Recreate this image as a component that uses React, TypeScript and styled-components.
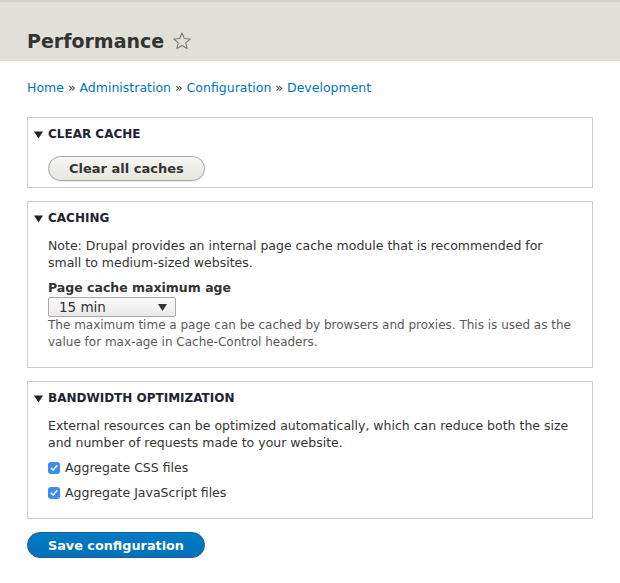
import React from 'react'
import styled, { createGlobalStyle } from 'styled-components'

const Global = createGlobalStyle`
  body {
    margin: 0;
    background: #fff;
    font-family: "DejaVu Sans", Verdana, sans-serif;
    font-size: 12.5px;
    color: #333;
  }
`

const Header = styled.header`
  background: #e0e0d8;
  border-top: 2px solid #d2d2ca;
  height: 61px;
  box-sizing: border-box;
  padding: 27px 27px 0;
`

const Title = styled.h1`
  margin: 0;
  font-size: 19px;
  line-height: 24px;
  font-weight: bold;
  color: #333;
  display: flex;
  align-items: center;
  gap: 8px;
`

const Main = styled.main`
  padding: 18px 27px 20px;
`

const Crumbs = styled.nav`
  color: #333;
  line-height: 17px;
  margin-bottom: 21px;
  a {
    color: #0074bd;
    text-decoration: none;
  }
`

const Fieldset = styled.section<{ $pad?: number }>`
  border: 1px solid #ccc;
  margin-bottom: 13px;
  padding: 8px 0 ${p => p.$pad ?? 17}px;
`

const Legend = styled.div`
  font-weight: bold;
  text-transform: uppercase;
  font-size: 12px;
  line-height: 15px;
  color: #222330;
  padding: 1px 0 0 6px;
  margin-bottom: 11px;
  display: flex;
  align-items: center;
  gap: 5px;
`

const Body = styled.div`
  padding: 0 20px;
`

const Text = styled.p<{ $muted?: boolean }>`
  margin: 0 0 8px;
  line-height: 17px;
  font-size: ${p => (p.$muted ? '12px' : '12.5px')};
  color: ${p => (p.$muted ? '#595959' : '#333')};
  &:last-child {
    margin-bottom: 0;
  }
`

const Label = styled.div`
  font-weight: bold;
  line-height: 17px;
`

const Select = styled.div`
  width: 128px;
  height: 20px;
  box-sizing: border-box;
  border: 1px solid #a8a8a8;
  border-radius: 2px;
  background: linear-gradient(#fcfcfc, #e8e8e8);
  display: flex;
  align-items: center;
  justify-content: space-between;
  padding: 0 8px 0 10px;
  font-size: 13.5px;
  margin-top: 1px;
`

const GrayButton = styled.button`
  display: block;
  margin-top: 14px;
  font-family: inherit;
  font-size: 13px;
  font-weight: bold;
  color: #333;
  height: 25px;
  padding: 0 20px;
  border-radius: 13px;
  border: 1px solid #a6a6a6;
  background: linear-gradient(#f6f6f3, #e7e7df);
  box-shadow: 0 1px 1px rgba(0, 0, 0, 0.08);
`

const SaveButton = styled.button`
  font-family: inherit;
  font-size: 12.8px;
  font-weight: bold;
  color: #fff;
  height: 26px;
  padding: 0 20px;
  border-radius: 13px;
  border: 1px solid #1e5c90;
  background: linear-gradient(#007bc6, #0071b8);
`

const Check = styled.label`
  display: flex;
  align-items: center;
  gap: 5px;
  line-height: 17px;
  margin-top: 8px;
`

const Box = styled.span`
  width: 12px;
  height: 12px;
  border-radius: 3px;
  background: #3b8ded;
  display: inline-flex;
  align-items: center;
  justify-content: center;
`

const Triangle = () => (
  <svg width="9" height="8" viewBox="0 0 9 8">
    <path d="M0 0.5 H9 L4.5 7.5 Z" fill="#222" />
  </svg>
)

const Star = () => (
  <svg width="20" height="20" viewBox="0 0 24 24">
    <path
      d="M12 2.5 L14.8 9 L21.8 9.6 L16.5 14.2 L18.1 21 L12 17.4 L5.9 21 L7.5 14.2 L2.2 9.6 L9.2 9 Z"
      fill="none"
      stroke="#7b7b6a"
      strokeWidth="1.3"
      strokeLinejoin="round"
    />
  </svg>
)

const Checkbox = ({ children }: { children: React.ReactNode }) => (
  <Check>
    <Box>
      <svg width="8" height="8" viewBox="0 0 8 8">
        <path d="M1.2 4.2 L3.2 6 L6.8 1.8" fill="none" stroke="#fff" strokeWidth="1.5" strokeLinecap="round" strokeLinejoin="round" />
      </svg>
    </Box>
    {children}
  </Check>
)

const App = () => {
  return (
    <>
      <Global />
      <Header>
        <Title>
          Performance <Star />
        </Title>
      </Header>
      <Main>
        <Crumbs>
          <a href="#">Home</a> » <a href="#">Administration</a> » <a href="#">Configuration</a> »{' '}
          <a href="#">Development</a>
        </Crumbs>

        <Fieldset $pad={6}>
          <Legend>
            <Triangle /> Clear cache
          </Legend>
          <Body>
            <GrayButton>Clear all caches</GrayButton>
          </Body>
        </Fieldset>

        <Fieldset $pad={16}>
          <Legend>
            <Triangle /> Caching
          </Legend>
          <Body>
            <Text>
              Note: Drupal provides an internal page cache module that is recommended for small to medium-sized
              websites.
            </Text>
            <Label>Page cache maximum age</Label>
            <Select>
              15 min
              <svg width="9" height="7" viewBox="0 0 9 7">
                <path d="M0 0 H9 L4.5 7 Z" fill="#333" />
              </svg>
            </Select>
            <Text $muted>
              The maximum time a page can be cached by browsers and proxies. This is used as the value for max-age in
              Cache-Control headers.
            </Text>
          </Body>
        </Fieldset>

        <Fieldset>
          <Legend>
            <Triangle /> Bandwidth optimization
          </Legend>
          <Body>
            <Text>
              External resources can be optimized automatically, which can reduce both the size and number of requests
              made to your website.
            </Text>
            <Checkbox>Aggregate CSS files</Checkbox>
            <Checkbox>Aggregate JavaScript files</Checkbox>
          </Body>
        </Fieldset>

        <SaveButton>Save configuration</SaveButton>
      </Main>
    </>
  )
}

export default App
